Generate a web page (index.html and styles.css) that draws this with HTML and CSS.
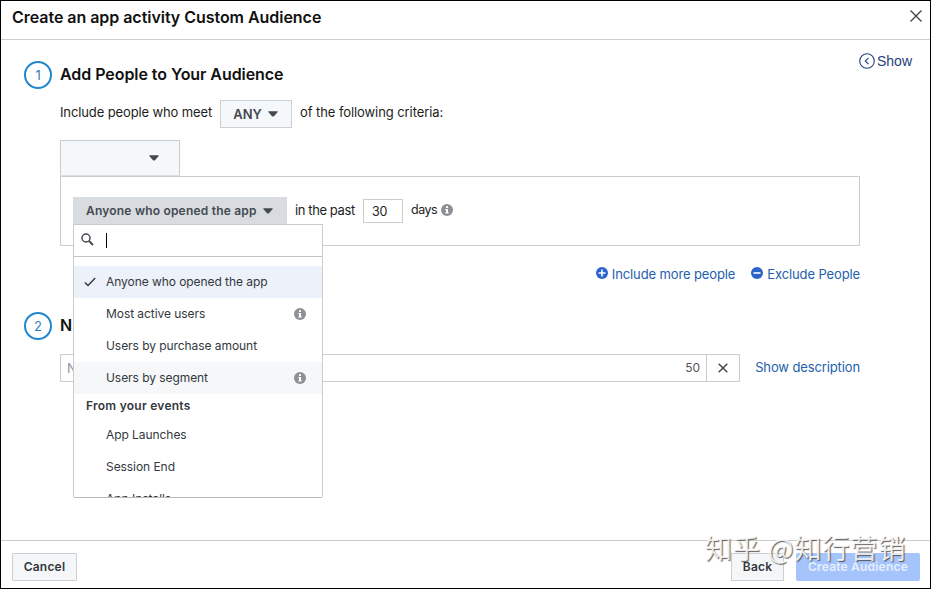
FILE: index.html
```html
<!DOCTYPE html>
<html lang="en">
<head>
    <meta charset="UTF-8">
    <title>Create an app activity Custom Audience</title>
    <link rel="stylesheet" href="styles.css">
</head>
<body>
<svg class="sprite" width="0" height="0">
    <symbol id="info" viewBox="0 0 12 12">
        <circle cx="6" cy="6" r="6" fill="#8d9095"/>
        <path d="M5 2.200h2v1.700H5zM4.200 5H7v3.600h.9v1H4.200v-1H5V6h-.8z" fill="#fff"/>
    </symbol>
    <symbol id="caret" viewBox="0 0 10 6">
        <path d="M.8.3h8.400q.8 0 .5.800L6 5.200q-1 .8-2 0L.3 1.100Q0 .3.8.3z" fill="#444950"/>
    </symbol>
</svg>
<div class="dialog">
    <div class="header">
        <h1>Create an app activity Custom Audience</h1>
        <svg class="close" width="14" height="14" viewBox="0 0 14 14"><path d="M1.500 1.500l11 11M12.500 1.500l-11 11" stroke="#444" stroke-width="1.400" fill="none"/></svg>
    </div>

    <div class="content">
        <div class="step">
            <span class="num">1</span>
            <div class="main">
                <h2>Add People to Your Audience</h2>
                <div class="criteria">
                    <span class="meet">Include people who meet</span>
                    <span class="btn any">ANY <svg width="10" height="6"><use href="#caret"/></svg></span>
                    <span class="following">of the following criteria:</span>
                </div>
                <div class="source"><svg width="10" height="6"><use href="#caret"/></svg></div>
                <div class="rule">
                    <div class="picker">
                        <div class="picked"><span>Anyone who opened the app</span><svg width="10" height="6"><use href="#caret"/></svg></div>
                        <div class="menu">
                            <div class="search">
                                <svg width="13" height="13" viewBox="0 0 13 13"><circle cx="5" cy="5" r="4" fill="none" stroke="#444950" stroke-width="1.500"/><path d="M8 8l4 4" stroke="#444950" stroke-width="2"/></svg>
                                <span class="cursor"></span>
                            </div>
                            <ul>
                                <li class="current"><svg class="check" width="12" height="10" viewBox="0 0 12 10"><path d="M.8 5.500l3.200 3L11.200.9" fill="none" stroke="#333840" stroke-width="1.400"/></svg>Anyone who opened the app</li>
                                <li>Most active users<svg class="tip" width="12" height="12"><use href="#info"/></svg></li>
                                <li>Users by purchase amount</li>
                                <li class="hover">Users by segment<svg class="tip" width="12" height="12"><use href="#info"/></svg></li>
                                <li class="group">From your events</li>
                                <li>App Launches</li>
                                <li>Session End</li>
                                <li>App Installs</li>
                            </ul>
                        </div>
                    </div>
                    <span class="past">in the past</span>
                    <span class="days-num">30</span>
                    <span class="days">days</span>
                    <svg class="days-tip" width="12" height="12"><use href="#info"/></svg>
                </div>
                <div class="links">
                    <a><svg width="12" height="12" viewBox="0 0 12 12"><circle cx="6" cy="6" r="6" fill="#2a65cc"/><path d="M6 2.500v7M2.500 6h7" stroke="#fff" stroke-width="1.600"/></svg><span>Include more people</span></a>
                    <a><svg width="12" height="12" viewBox="0 0 12 12"><circle cx="6" cy="6" r="6" fill="#2a65cc"/><path d="M2.500 6h7" stroke="#fff" stroke-width="1.600"/></svg><span>Exclude People</span></a>
                </div>
            </div>
            <a class="show"><svg width="16" height="16" viewBox="0 0 16 16"><circle cx="8" cy="8" r="7.300" fill="none" stroke="#24417c" stroke-width="1.100"/><path d="M9.500 4.800L6.300 8l3.200 3.200" fill="none" stroke="#24417c" stroke-width="1.100"/></svg>Show</a>
        </div>

        <div class="step second">
            <span class="num">2</span>
            <div class="main">
                <h2>Na</h2>
                <div class="name-row">
                    <div class="field">
                        <span class="placeholder">N</span>
                        <span class="count">50</span>
                        <span class="clear"><svg width="10" height="10" viewBox="0 0 10 10"><path d="M.7.7l8.600 8.600M9.300.7L.7 9.300" stroke="#444950" stroke-width="1.500"/></svg></span>
                    </div>
                    <a class="desc">Show description</a>
                </div>
            </div>
        </div>
    </div>

    <div class="footer">
        <span class="btn cancel">Cancel</span>
        <span class="btn back">Back</span>
        <span class="btn create">Create Audience</span>
    </div>
    <div class="watermark">知乎 @知行营销</div>
</div>
</body>
</html>
```
FILE: styles.css
```css
* {
    padding: 0;
    margin: 0;
    box-sizing: border-box;
    list-style: none;
}

body {
    font: 13px/18px Inter, "Liberation Sans", sans-serif;
    letter-spacing: -.12px;
    color: #1c1e21;
    background-color: #fff;
}

svg {
    display: block;
    flex: none;
}

.sprite {
    position: absolute;
}

.dialog {
    position: relative;
    display: flex;
    flex-direction: column;
    width: 931px;
    height: 589px;
    border: 1px solid #000;
    overflow: hidden;
    white-space: nowrap;
}

.header {
    display: flex;
    justify-content: space-between;
    height: 39px;
    padding: 8px 7px 0 11px;
    border-bottom: 1px solid #ccced2;
}

h1, h2 {
    font-size: 16px;
    font-weight: 600;
    letter-spacing: -.04px;
    color: #111;
}

h1 {
    line-height: 17px;
}

h2 {
    line-height: 27px;
    letter-spacing: -.06px;
}

.content {
    flex: 1;
    padding: 21px 17px 0 23px;
}

.step {
    display: flex;
    align-items: flex-start;
}

.num {
    width: 28px;
    height: 28px;
    margin-right: 8px;
    border: 2px solid #2086cd;
    border-radius: 50%;
    font-size: 13px;
    line-height: 25px;
    text-align: center;
    color: #2c7fc0;
}

.main {
    flex: none;
    width: 800px;
}

.criteria {
    display: flex;
    height: 28px;
    margin-top: 12px;
    line-height: 25px;
}

.meet {
    width: 160px;
}

.following {
    margin-left: 8px;
    letter-spacing: -.08px;
}

.btn {
    display: flex;
    align-items: center;
    justify-content: center;
    height: 28px;
    border: 1px solid #ccd0d5;
    background-color: #f5f6f7;
    font-size: 12px;
    font-weight: 600;
    letter-spacing: .2px;
    color: #333840;
}

.any {
    width: 72px;
    gap: 6px;
    padding-right: 1px;
    font-size: 13px;
    letter-spacing: 0;
    color: #444950;
    background-color: #f5f8fa;
}

.source {
    display: flex;
    align-items: center;
    justify-content: flex-end;
    width: 120px;
    height: 36px;
    margin-top: 12px;
    padding-right: 20px;
    border: 1px solid #ccc;
    border-bottom-color: #dcdfe2;
    background-color: #f5f8fa;
}

.rule {
    display: flex;
    align-items: center;
    height: 70px;
    padding: 0 12px;
    border: 1px solid #ccc;
}

.picker {
    position: relative;
    width: 214px;
}

.picked {
    display: flex;
    align-items: center;
    justify-content: space-between;
    height: 28px;
    padding: 0 14px 0 13px;
    font-size: 12px;
    font-weight: 600;
    letter-spacing: .2px;
    color: #444950;
    background-color: #d8dce0;
}

.past {
    width: 68px;
    margin-left: 8px;
    padding-bottom: 2px;
    letter-spacing: -.4px;
}

.days-num {
    width: 40px;
    height: 24px;
    padding-left: 8px;
    border: 1px solid #ccc;
    font-size: 12.500px;
    line-height: 23px;
}

.days {
    width: 26px;
    margin: 0 4px 0 8px;
    padding-bottom: 2px;
    font-size: 12.500px;
    letter-spacing: -.5px;
}

.days-tip {
    margin-bottom: 2px;
}

/* dropdown list, lies over step 2 */
.menu {
    position: absolute;
    z-index: 2;
    left: 0;
    top: 27px;
    width: 250px;
    height: 274px;
    border: 1px solid #ccc;
    border-bottom-color: #bbb;
    border-radius: 0 0 2px 2px;
    background-color: #fff;
    overflow: hidden;
}

.search {
    display: flex;
    align-items: center;
    height: 32px;
    padding: 0 0 2px 7px;
    border-bottom: 1px solid #c4c4c4;
}

.cursor {
    width: 1px;
    height: 15px;
    margin: 2px 0 0 12px;
    background-color: #000;
}

.menu ul {
    padding-top: 9px;
}

.menu li {
    display: flex;
    align-items: center;
    height: 32px;
    padding: 0 16px 0 32px;
    font-size: 12px;
    letter-spacing: -.06px;
    color: #333840;
}

.menu .current {
    padding-left: 10px;
    background-color: #edf1f9;
}

.check {
    margin-right: 10px;
}

.tip {
    margin-left: auto;
}

.menu .hover {
    background-color: #f6f7f8;
}

.menu .group {
    height: 24px;
    margin-bottom: 1px;
    padding-left: 12px;
    font-weight: 600;
    letter-spacing: .25px;
}

.links {
    display: flex;
    justify-content: flex-end;
    gap: 16px;
    margin-top: 19px;
}

a {
    color: #2460ad;
}

.links a {
    display: flex;
    gap: 4px;
}

.links svg {
    margin-top: 2px;
}

.show {
    display: flex;
    align-items: center;
    gap: 2px;
    margin-left: auto;
    margin-top: -10px;
    margin-left: -1px;
    font: 14px/20px "Liberation Sans", sans-serif;
    letter-spacing: 0;
    color: #24417c;
}

.second {
    margin-top: 29px;
}

.second h2 {
    letter-spacing: .3px;
}

.name-row {
    display: flex;
    align-items: center;
    justify-content: space-between;
    margin-top: 15px;
}

.desc {
    padding-bottom: 2px;
}

.field {
    display: flex;
    align-items: center;
    width: 680px;
    height: 28px;
    border: 1px solid #ccc;
}

.placeholder {
    padding-left: 6px;
    color: #8d949e;
}

.count {
    margin-left: auto;
    margin-right: 6px;
    font-size: 12px;
    color: #555;
}

.clear {
    display: flex;
    align-items: center;
    justify-content: center;
    width: 33px;
    height: 26px;
    border-left: 1px solid #ccc;
}

.footer {
    display: flex;
    height: 48px;
    padding: 12px 10px 0 11px;
    border-top: 1px solid #ccc;
}

.cancel {
    width: 65px;
    border-radius: 1px;
}

.back {
    width: 53px;
    margin-left: auto;
    margin-right: 12px;
}

.create {
    width: 124px;
    border: 0;
    border-radius: 2px;
    color: #e5eefe;
    background-color: #a5c4fb;
}

.watermark {
    position: absolute;
    left: 704px;
    top: 527px;
    font: 27px/40px "Noto Sans CJK SC", sans-serif;
    letter-spacing: 1px;
    color: rgba(255, 255, 255, .85);
    text-shadow: 1px 1px 1px rgba(70, 70, 70, .85);
}
```
